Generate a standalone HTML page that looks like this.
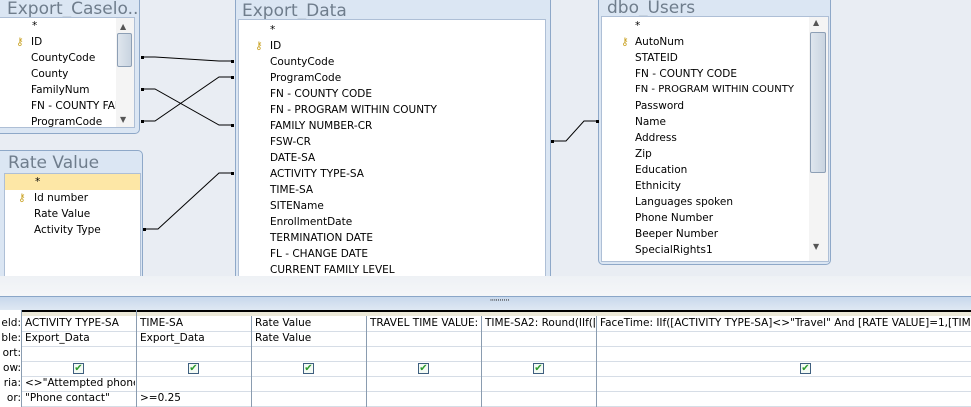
<!DOCTYPE html>
<html><head><meta charset="utf-8"><style>
*{margin:0;padding:0;box-sizing:border-box}
body{width:971px;height:407px;overflow:hidden;background:#fff;font-family:"DejaVu Sans","Liberation Sans",sans-serif;font-size:10px;color:#000;position:relative}
.top{position:absolute;left:0;top:0;width:971px;height:276px;background:#e9edf3;overflow:hidden}
.strip{position:absolute;left:0;top:276px;width:971px;height:20px;background:linear-gradient(#eef1f5,#f5f6f8)}
.split{position:absolute;left:0;top:296px;width:971px;height:14px;background:linear-gradient(#c8d8ec,#dfe8f3);border-top:1px solid #8aa6c8}
.tbl{position:absolute;background:#dbe6f3;border:1px solid #8ea8c8;border-radius:5px}
.tt{position:absolute;left:6px;font-family:"DejaVu Sans",sans-serif;font-size:17px;color:#6f7d8c;line-height:18px;white-space:nowrap;overflow:hidden}
.bd{position:absolute;background:#fff;border:1px solid #aebfd6;overflow:hidden}
.r{position:absolute;white-space:nowrap;line-height:16px;font-size:10.5px}
.sb{position:absolute;background:#f0f0f0}
.thumb{position:absolute;background:linear-gradient(90deg,#dfe6ee,#c9d4e0);border:1px solid #8d9fb5;border-radius:2px}
svg.l{position:absolute;left:0;top:0}
.grid{position:absolute;left:0;top:310px;width:971px;height:97px}
.lab{position:absolute;left:0;width:21px;text-align:right;font-size:10.5px;line-height:15px;overflow:hidden}
.c{position:absolute;font-size:10.5px;line-height:15px;white-space:nowrap;overflow:hidden}
.cb{position:absolute;width:11px;height:11px;border:1px solid #3f5f7f;background:#f4fbf4;color:#2e9a2e;font-size:10px;line-height:9px;text-align:center;font-weight:bold}
</style></head><body>
<div class="top">

<!-- Export_Caselo -->
<div class="tbl" style="left:-6px;top:-6px;width:146px;height:140px">
 <div class="tt" style="top:5px;left:12px;width:130px">Export_Caselo...</div>
 <div class="bd" style="left:3px;top:22px;width:137px;height:111px">
  <div class="r" style="left:33px;top:0px">*</div>
  <div class="r" style="left:17px;top:16px;color:#c8a020">&#9911;</div>
  <div class="r" style="left:32px;top:16px">ID</div>
  <div class="r" style="left:32px;top:32px">CountyCode</div>
  <div class="r" style="left:32px;top:48px">County</div>
  <div class="r" style="left:32px;top:64px">FamilyNum</div>
  <div class="r" style="left:32px;top:80px;width:86px;overflow:hidden">FN - COUNTY FAMILY</div>
  <div class="r" style="left:32px;top:96px">ProgramCode</div>
  <div class="sb" style="left:117px;top:0;width:18px;height:110px;background:#f4f4f4"></div>
  <div class="r" style="left:121px;top:1px;font-size:8px;color:#555">&#9650;</div>
  <div class="thumb" style="left:118px;top:15px;width:15px;height:34px"></div>
  <div class="r" style="left:121px;top:94px;font-size:8px;color:#555">&#9660;</div>
 </div>
</div>

<!-- Rate Value -->
<div class="tbl" style="left:-6px;top:150px;width:149px;height:140px">
 <div class="tt" style="top:3px;left:13px">Rate Value</div>
 <div class="bd" style="left:9px;top:22px;width:137px;height:120px">
  <div style="position:absolute;left:0;top:0;width:135px;height:16px;background:#fde7a6"></div>
  <div class="r" style="left:30px;top:0px">*</div>
  <div class="r" style="left:13px;top:16px;color:#c8a020">&#9911;</div>
  <div class="r" style="left:29px;top:16px">Id number</div>
  <div class="r" style="left:29px;top:32px">Rate Value</div>
  <div class="r" style="left:29px;top:48px">Activity Type</div>
 </div>
</div>

<!-- Export_Data -->
<div class="tbl" style="left:235px;top:-6px;width:316px;height:300px">
 <div class="tt" style="top:7px;left:6px">Export_Data</div>
 <div class="bd" style="left:2px;top:24px;width:308px;height:270px">
  <div class="r" style="left:31px;top:2px">*</div>
  <div class="r" style="left:16px;top:18px;color:#c8a020">&#9911;</div>
  <div class="r" style="left:31px;top:18px">ID</div>
  <div class="r" style="left:31px;top:34px">CountyCode</div>
  <div class="r" style="left:31px;top:50px">ProgramCode</div>
  <div class="r" style="left:31px;top:66px">FN - COUNTY CODE</div>
  <div class="r" style="left:31px;top:82px">FN - PROGRAM WITHIN COUNTY</div>
  <div class="r" style="left:31px;top:98px">FAMILY NUMBER-CR</div>
  <div class="r" style="left:31px;top:114px">FSW-CR</div>
  <div class="r" style="left:31px;top:130px">DATE-SA</div>
  <div class="r" style="left:31px;top:146px">ACTIVITY TYPE-SA</div>
  <div class="r" style="left:31px;top:162px">TIME-SA</div>
  <div class="r" style="left:31px;top:178px">SITEName</div>
  <div class="r" style="left:31px;top:194px">EnrollmentDate</div>
  <div class="r" style="left:31px;top:210px">TERMINATION DATE</div>
  <div class="r" style="left:31px;top:226px">FL - CHANGE DATE</div>
  <div class="r" style="left:31px;top:242px">CURRENT FAMILY LEVEL</div>
 </div>
</div>

<!-- dbo_Users -->
<div class="tbl" style="left:598px;top:-6px;width:233px;height:271px">
 <div class="tt" style="top:4px;left:8px">dbo_Users</div>
 <div class="bd" style="left:2px;top:21px;width:228px;height:246px">
  <div class="r" style="left:33px;top:1px">*</div>
  <div class="r" style="left:19px;top:17px;color:#c8a020">&#9911;</div>
  <div class="r" style="left:33px;top:17px">AutoNum</div>
  <div class="r" style="left:33px;top:33px">STATEID</div>
  <div class="r" style="left:33px;top:49px">FN - COUNTY CODE</div>
  <div class="r" style="left:33px;top:65px;font-size:10px">FN - PROGRAM WITHIN COUNTY</div>
  <div class="r" style="left:33px;top:81px">Password</div>
  <div class="r" style="left:33px;top:97px">Name</div>
  <div class="r" style="left:33px;top:113px">Address</div>
  <div class="r" style="left:33px;top:129px">Zip</div>
  <div class="r" style="left:33px;top:145px">Education</div>
  <div class="r" style="left:33px;top:161px">Ethnicity</div>
  <div class="r" style="left:33px;top:177px">Languages spoken</div>
  <div class="r" style="left:33px;top:193px">Phone Number</div>
  <div class="r" style="left:33px;top:209px">Beeper Number</div>
  <div class="r" style="left:33px;top:225px">SpecialRights1</div>
  <div class="sb" style="left:207px;top:0;width:19px;height:244px;background:#f4f4f4"></div>
  <div class="r" style="left:211px;top:-2px;font-size:8px;color:#555">&#9650;</div>
  <div class="thumb" style="left:208px;top:15px;width:16px;height:141px"></div>
  <div class="r" style="left:211px;top:222px;font-size:8px;color:#555">&#9660;</div>
 </div>
</div>

<svg class="l" width="971" height="276" fill="none" stroke="#000" stroke-width="1">
 <path d="M141 57H155L219 61H233"/>
 <path d="M141 89H155L219 125H233"/>
 <path d="M141 121H155L219 77H233"/>
 <path d="M143 229H158L219 173H233"/>
 <path d="M551 141H566L584 121H598"/>
 <g fill="#000" stroke="none">
 <rect x="141" y="56" width="3" height="3"/><rect x="231" y="60" width="3" height="3"/>
 <rect x="141" y="88" width="3" height="3"/><rect x="231" y="124" width="3" height="3"/>
 <rect x="141" y="120" width="3" height="3"/><rect x="231" y="76" width="3" height="3"/>
 <rect x="143" y="228" width="3" height="3"/><rect x="231" y="172" width="3" height="3"/>
 <rect x="551" y="140" width="3" height="3"/><rect x="596" y="120" width="3" height="3"/>
 </g>
</svg>
</div>
<div class="strip"></div>
<div class="split"><div style="position:absolute;left:490px;top:1px;font-size:7px;color:#333">''''''''''</div></div>

<div class="grid">
 <div style="position:absolute;left:0;top:0;width:971px;height:97px;background:#fff"></div>
 <div style="position:absolute;left:21px;top:0;width:950px;height:6px;background:#ece9d8;border-top:2px solid #000;border-left:1px solid #000"></div>
 <svg style="position:absolute;left:0;top:0" width="971" height="97">
  <g stroke="#d6dde6" stroke-width="1">
   <path d="M21 21.5H971M21 36.5H971M21 51.5H971M21 66.5H971M21 81.5H971M21 96.5H971"/>
  </g>
  <g stroke="#8a9cb0"><path d="M21.5 0V97M136.5 0V97M251.5 6V97M366.5 6V97M481.5 6V97M596.5 6V97"/></g>
 </svg>
 <div class="lab" style="top:6px">eld:</div>
 <div class="lab" style="top:21px">ble:</div>
 <div class="lab" style="top:36px">ort:</div>
 <div class="lab" style="top:51px">ow:</div>
 <div class="lab" style="top:66px">ria:</div>
 <div class="lab" style="top:81px">or:</div>

 <div class="c" style="left:25px;top:6px;width:110px">ACTIVITY TYPE-SA</div>
 <div class="c" style="left:140px;top:6px;width:110px">TIME-SA</div>
 <div class="c" style="left:255px;top:6px;width:110px">Rate Value</div>
 <div class="c" style="left:370px;top:6px;width:110px">TRAVEL TIME VALUE: F</div>
 <div class="c" style="left:485px;top:6px;width:110px">TIME-SA2: Round(IIf([A</div>
 <div class="c" style="left:600px;top:6px;width:371px">FaceTime: IIf([ACTIVITY TYPE-SA]&lt;&gt;"Travel" And [RATE VALUE]=1,[TIME-SA],0)</div>
 <div class="c" style="left:25px;top:21px">Export_Data</div>
 <div class="c" style="left:140px;top:21px">Export_Data</div>
 <div class="c" style="left:255px;top:21px">Rate Value</div>
 <div class="cb" style="left:73px;top:53px">&#10004;</div>
 <div class="cb" style="left:188px;top:53px">&#10004;</div>
 <div class="cb" style="left:303px;top:53px">&#10004;</div>
 <div class="cb" style="left:418px;top:53px">&#10004;</div>
 <div class="cb" style="left:533px;top:53px">&#10004;</div>
 <div class="cb" style="left:800px;top:53px">&#10004;</div>
 <div class="c" style="left:25px;top:66px;width:110px">&lt;&gt;"Attempted phone</div>
 <div class="c" style="left:25px;top:81px">"Phone contact"</div>
 <div class="c" style="left:140px;top:81px">&gt;=0.25</div>
</div>
</body></html>
